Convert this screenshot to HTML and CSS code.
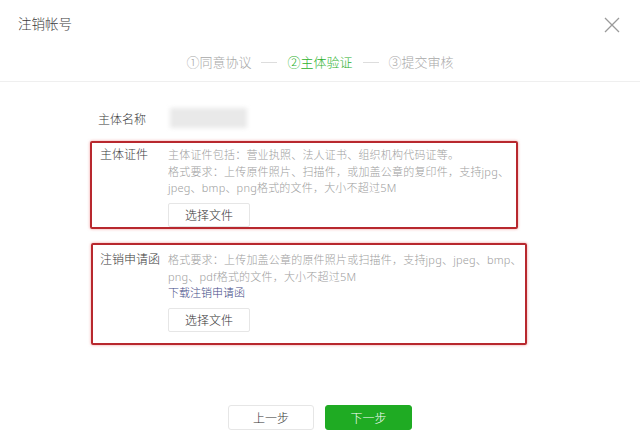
FILE: index.html
```html
<!DOCTYPE html>
<html lang="zh-CN">
<head>
    <meta charset="UTF-8">
    <meta name="viewport" content="width=device-width, initial-scale=1.0">
    <title>注销帐号</title>
    <link rel="stylesheet" href="styles.css">
</head>
<body>

    <div class="dialog">
        <div class="header">
            <span class="title">注销帐号</span>
            <svg class="close" width="16" height="16" viewBox="0 0 16 16">
                <path d="M1 1 L15 15 M15 1 L1 15" stroke="#9a9a9a" stroke-width="1.3" fill="none"/>
            </svg>
        </div>

        <div class="steps">
            <span class="step">①同意协议</span>
            <span class="dash"></span>
            <span class="step active">②主体验证</span>
            <span class="dash"></span>
            <span class="step">③提交审核</span>
        </div>

        <div class="form">
            <div class="row name-row">
                <span class="label">主体名称</span>
                <span class="blurred"></span>
            </div>

            <div class="row marked first-mark">
                <span class="label">主体证件</span>
                <div class="content">
                    <p class="tip">主体证件包括：营业执照、法人证书、组织机构代码证等。<br>
                    格式要求：上传原件照片、扫描件，或加盖公章的复印件，支持jpg、<br>
                    jpeg、bmp、png格式的文件，大小不超过5M</p>
                    <button class="file-btn">选择文件</button>
                </div>
            </div>

            <div class="row marked second-mark">
                <span class="label">注销申请函</span>
                <div class="content">
                    <p class="tip">格式要求：上传加盖公章的原件照片或扫描件，支持jpg、jpeg、bmp、<br>
                    png、pdf格式的文件，大小不超过5M</p>
                    <a class="download" href="#">下载注销申请函</a>
                    <button class="file-btn">选择文件</button>
                </div>
            </div>
        </div>

        <div class="footer">
            <button class="btn">上一步</button>
            <button class="btn primary">下一步</button>
        </div>
    </div>

</body>
</html>
```

FILE: styles.css
```css
body {
    margin: 0;
    background-color: #fff;
    font-family: "Noto Sans", "Noto Sans CJK SC", sans-serif;
    font-weight: 300;
    color: #333;
}

.dialog {
    width: 640px;
    height: 446px;
    overflow: hidden;
}

.header {
    display: flex;
    justify-content: space-between;
    align-items: center;
    padding: 16px 20px 0 18px;
    height: 16px;
}

.title {
    font-size: 13.5px;
    line-height: 16px;
    color: #3a3a3a;
}

.close {
    display: block;
    margin-top: 2px;
}

.steps {
    display: flex;
    justify-content: center;
    align-items: center;
    margin-top: 20px;
    height: 20px;
    padding-bottom: 9px;
    border-bottom: 1px solid #efefef;
}

.step {
    font-size: 13px;
    line-height: 20px;
    color: #a8a8a8;
}

.step.active {
    color: #2cb12c;
}

.dash {
    width: 16px;
    height: 1px;
    margin: 0 10px;
    background-color: #ddd;
}

.form {
    padding: 28px 0 0 90px;
}

.row {
    display: flex;
    align-items: flex-start;
}

.label {
    flex: 0 0 68px;
    font-size: 12px;
    line-height: 16.5px;
    color: #3a3a3a;
}

.name-row {
    padding-left: 8px;
}

.name-row .label {
    flex-basis: 72px;
    line-height: 20px;
}

.blurred {
    width: 77px;
    height: 20px;
    margin-top: -2px;
    background-color: #e9e9e9;
    filter: blur(2px);
}

.marked {
    border: 2px solid #b8282e;
    border-radius: 2px;
    box-shadow: 0 0 3px rgba(225, 70, 70, 0.55);
    padding-left: 8px;
}

.first-mark {
    width: 416px;
    margin-top: 11px;
    padding-top: 4px;
}

.second-mark {
    width: 425px;
    margin-top: 14px;
    margin-left: 1px;
    padding-left: 7px;
    padding-top: 7px;
    padding-bottom: 11px;
}

.content {
    flex: 1;
}

.tip {
    margin: 0;
    font-size: 11px;
    line-height: 16.5px;
    color: #a0a0a0;
    white-space: nowrap;
    letter-spacing: 0.2px;
}

.download {
    display: block;
    font-size: 11px;
    line-height: 16.5px;
    color: #3f4a86;
    text-decoration: none;
}

.file-btn {
    display: block;
    width: 82px;
    height: 24px;
    margin-top: 6.5px;
    padding: 0;
    font-family: inherit;
    font-weight: 300;
    font-size: 12px;
    color: #333;
    background-color: #fff;
    border: 1px solid #e6e6e6;
    border-radius: 2px;
}

.footer {
    display: flex;
    justify-content: center;
    gap: 11px;
    margin-top: 60px;
}

.btn {
    width: 86px;
    height: 25px;
    padding: 0;
    font-family: inherit;
    font-weight: 300;
    font-size: 12px;
    color: #333;
    background-color: #fff;
    border: 1px solid #e6e6e6;
    border-radius: 3px;
}

.btn.primary {
    width: 87px;
    color: #fff;
    background-color: #1fab23;
    border-color: #1fab23;
}
```
